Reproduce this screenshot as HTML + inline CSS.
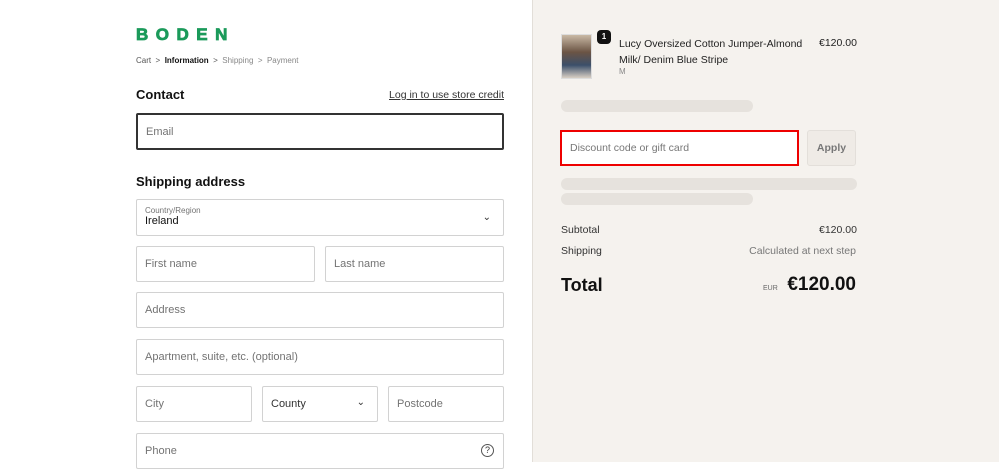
<!DOCTYPE html>
<html><head><style>
*{box-sizing:border-box;margin:0;padding:0}
body{width:999px;height:462px;overflow:hidden;font-family:"Liberation Sans",sans-serif;background:#fff;position:relative;color:#111}
.a{position:absolute}
.right{position:absolute;left:532px;top:0;width:467px;height:462px;background:#f5f2ee;border-left:1px solid #e2ded8}
.inp{position:absolute;border:1px solid #d2d2d2;border-radius:2px;background:#fff;font-size:11px;color:#737373;padding-left:8px;display:flex;align-items:center}
.bar{position:absolute;background:#e6e2dd;border-radius:6px;height:12px}
</style></head><body>
<div class="a" style="left:136px;top:25px;font-size:17px;font-weight:900;color:#1b9a5a;letter-spacing:7.5px;-webkit-text-stroke:0.8px #1b9a5a">BODEN</div>
<div class="a" style="left:136px;top:56px;font-size:8px;color:#555">Cart &nbsp;&gt;&nbsp; <b style="color:#111">Information</b> &nbsp;&gt;&nbsp; <span style="color:#888">Shipping &nbsp;&gt;&nbsp; Payment</span></div>
<div class="a" style="left:136px;top:87px;font-size:13px;font-weight:bold">Contact</div>
<div class="a" style="right:495px;top:89px;font-size:10.5px;color:#333;text-decoration:underline">Log in to use store credit</div>
<div class="inp" style="left:136px;top:113px;width:368px;height:37px;border:2px solid #333">Email</div>
<div class="a" style="left:136px;top:174px;font-size:13px;font-weight:bold">Shipping address</div>
<div class="inp" style="left:136px;top:199px;width:368px;height:37px;display:block;padding-top:6px"><div style="font-size:8px">Country/Region</div><div style="color:#111;font-size:11px">Ireland</div><div class="a" style="right:12px;top:12px;font-size:10px;color:#333">&#8964;</div></div>
<div class="inp" style="left:136px;top:246px;width:179px;height:36px">First name</div>
<div class="inp" style="left:325px;top:246px;width:179px;height:36px">Last name</div>
<div class="inp" style="left:136px;top:292px;width:368px;height:36px">Address</div>
<div class="inp" style="left:136px;top:339px;width:368px;height:36px">Apartment, suite, etc. (optional)</div>
<div class="inp" style="left:136px;top:386px;width:116px;height:36px">City</div>
<div class="inp" style="left:262px;top:386px;width:116px;height:36px;color:#333">County<span class="a" style="right:12px;top:10px;font-size:10px">&#8964;</span></div>
<div class="inp" style="left:388px;top:386px;width:116px;height:36px">Postcode</div>
<div class="inp" style="left:136px;top:433px;width:368px;height:36px">Phone<span class="a" style="right:9px;top:10px;width:13px;height:13px;border:1px solid #555;border-radius:50%;font-size:9px;text-align:center;line-height:11px;color:#333">?</span></div>
<div class="right">
<div class="a" style="left:28px;top:34px;width:31px;height:45px;border:1px solid #ddd;background:linear-gradient(#c9b9a5,#6b5444 40%,#3b4f6a 70%,#d8cfc4)"></div>
<div class="a" style="left:64px;top:30px;width:14px;height:14px;background:#111;color:#fff;border-radius:4px;font-size:8px;font-weight:bold;text-align:center;line-height:14px">1</div>
<div class="a" style="left:86px;top:36px;width:190px;font-size:10.5px;line-height:16px;color:#222">Lucy Oversized Cotton Jumper-Almond Milk/ Denim Blue Stripe</div>
<div class="a" style="left:86px;top:67px;font-size:8px;color:#888">M</div>
<div class="a" style="left:286px;top:37px;font-size:10.5px;color:#222">€120.00</div>
<div class="bar" style="left:28px;top:100px;width:192px"></div>
<div class="a" style="left:27px;top:130px;width:239px;height:36px;border:2px solid #e00;background:#fff;font-size:10.5px;color:#777;padding-left:8px;line-height:32px">Discount code or gift card</div>
<div class="a" style="left:274px;top:130px;width:49px;height:36px;border:1px solid #e3dfda;border-radius:3px;background:#efebe6;font-size:10.5px;color:#777;font-weight:bold;text-align:center;line-height:34px">Apply</div>
<div class="bar" style="left:28px;top:178px;width:296px"></div>
<div class="bar" style="left:28px;top:193px;width:192px"></div>
<div class="a" style="left:28px;top:224px;font-size:10.5px;color:#333">Subtotal</div>
<div class="a" style="left:286px;top:224px;font-size:10.5px;color:#333">€120.00</div>
<div class="a" style="left:28px;top:245px;font-size:10.5px;color:#333">Shipping</div>
<div class="a" style="right:143px;top:245px;font-size:10.5px;color:#777">Calculated at next step</div>
<div class="a" style="left:28px;top:275px;font-size:18px;font-weight:bold">Total</div>
<div class="a" style="left:230px;top:285px;font-size:7px;color:#666">EUR</div>
<div class="a" style="right:143px;top:274px;font-size:19px;font-weight:bold">€120.00</div>
</div>
</body></html>
